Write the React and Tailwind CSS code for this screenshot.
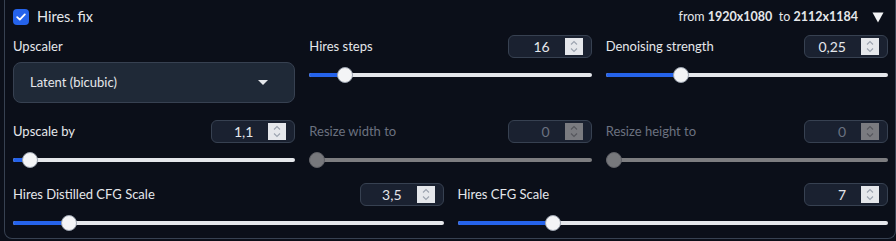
import React from "react";

const FONT = { fontFamily: 'Lato, "Noto Sans", sans-serif' };

function Spinner({ disabled }) {
  return (
    <div
      className={
        "w-[18px] h-[17px] flex flex-col items-center justify-center " +
        (disabled ? "bg-[#7a7b80]" : "bg-[#e5e7eb]")
      }
    >
      <svg width="10" height="15" viewBox="0 0 10 15" fill="none">
        <path d="M2 5.5 L5 2.5 L8 5.5" stroke={disabled ? "#55565c" : "#9ca3af"} strokeWidth="1.1" />
        <path d="M2 9.5 L5 12.5 L8 9.5" stroke={disabled ? "#55565c" : "#9ca3af"} strokeWidth="1.1" />
      </svg>
    </div>
  );
}

function NumberBox({ value, disabled }) {
  return (
    <div className="w-[84px] h-[23px] rounded-[6px] border border-[#374151] bg-[#1a2130] flex items-center justify-end pr-[8px] gap-[15px]">
      <span className={"text-[14px] leading-none " + (disabled ? "text-[#6b7280]" : "text-[#e5e7eb]")}>
        {value}
      </span>
      <Spinner disabled={disabled} />
    </div>
  );
}

function Slider({ pos, disabled }) {
  return (
    <div className="relative h-4 flex items-center">
      <div className={"w-full h-[4px] rounded-full " + (disabled ? "bg-[#7d7d80]" : "bg-[#e5e7eb]")} />
      {!disabled && (
        <div className="absolute left-0 h-[4px] rounded-l-full bg-[#2563eb]" style={{ width: pos }} />
      )}
      <div
        className={
          "absolute top-0 w-4 h-4 rounded-full border " +
          (disabled ? "bg-[#77787c] border-[#5f6066]" : "bg-[#f3f4f6] border-[#9ca3af]")
        }
        style={{ left: pos - 8 }}
      />
    </div>
  );
}

function SliderBlock({ label, value, pos, disabled, className = "" }) {
  return (
    <div className={"flex flex-col " + className}>
      <div className="h-[23px] flex items-center justify-between">
        <span className={"text-[13px] " + (disabled ? "text-[#6b7280]" : "text-[#e5e7eb]")}>{label}</span>
        <NumberBox value={value} disabled={disabled} />
      </div>
      <div className="mt-[9px]">
        <Slider pos={pos} disabled={disabled} />
      </div>
    </div>
  );
}

export default function App() {
  return (
    <div className="w-[896px] h-[241px] bg-[#0b0f19] overflow-hidden" style={FONT}>
      <div className="ml-[4px] h-[239px] border-l border-r border-b border-[#374151] rounded-b-[8px] pl-[8px] pr-[7px] pt-[9px]">
        <div className="h-[16px] flex items-center justify-between">
          <div className="flex items-center gap-[8px]">
            <div className="w-4 h-4 rounded-[4px] bg-[#2563eb] flex items-center justify-center">
              <svg width="10" height="8" viewBox="0 0 10 8" fill="none">
                <path d="M1.2 4.2 L3.8 6.6 L8.8 1.4" stroke="white" strokeWidth="1.8" strokeLinecap="round" strokeLinejoin="round" />
              </svg>
            </div>
            <span className="text-[14.5px] text-[#e5e7eb]">Hires. fix</span>
          </div>
          <div className="flex items-center gap-[14px] pr-[4px]">
            <span className="text-[12.5px] text-[#e5e7eb]">
              from <b>1920x1080</b>&nbsp; to <b>2112x1184</b>
            </span>
            <svg width="12" height="11" viewBox="0 0 12 11">
              <path d="M0.5 0.5 L11.5 0.5 L6 10.5 Z" fill="#f3f4f6" />
            </svg>
          </div>
        </div>

        <div className="mt-[10px] grid grid-cols-3 gap-x-[14px]">
          <div className="flex flex-col">
            <div className="h-[23px] flex items-center">
              <span className="text-[13px] text-[#e5e7eb]">Upscaler</span>
            </div>
            <div className="mt-[4px] h-[41px] rounded-[8px] border border-[#374151] bg-[#1f2937] flex items-center justify-between pl-[16px] pr-[26px]">
              <span className="text-[13px] text-[#e5e7eb]">Latent (bicubic)</span>
              <svg width="10" height="5" viewBox="0 0 10 5">
                <path d="M0 0 L10 0 L5 5 Z" fill="#e5e7eb" />
              </svg>
            </div>
          </div>
          <SliderBlock label="Hires steps" value="16" pos={36} />
          <SliderBlock label="Denoising strength" value="0,25" pos={75} />
        </div>

        <div className="mt-[17px] grid grid-cols-3 gap-x-[14px]">
          <SliderBlock label="Upscale by" value="1,1" pos={17} />
          <SliderBlock label="Resize width to" value="0" pos={8} disabled />
          <SliderBlock label="Resize height to" value="0" pos={8} disabled />
        </div>

        <div className="mt-[15px] grid grid-cols-2 gap-x-[14px]">
          <SliderBlock label="Hires Distilled CFG Scale" value="3,5" pos={56} />
          <SliderBlock label="Hires CFG Scale" value="7" pos={95} />
        </div>
      </div>
    </div>
  );
}
